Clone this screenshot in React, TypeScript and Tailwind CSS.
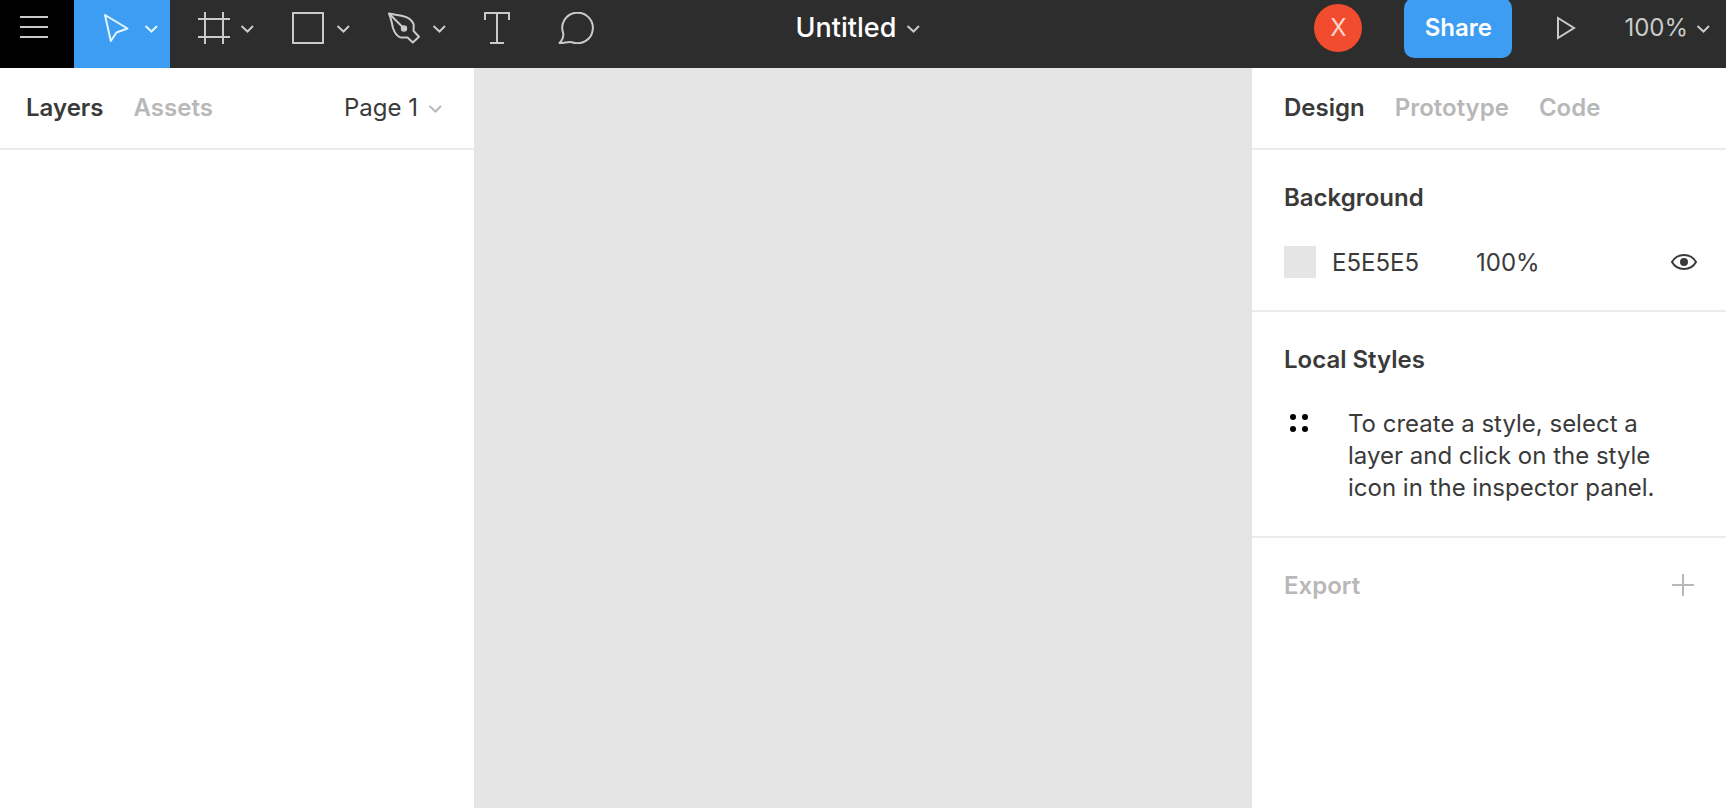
import type { ReactNode } from "react";
import clsx from "clsx";

function Chevron({ className }: { className?: string }) {
  return (
    <svg
      viewBox="0 0 14 10"
      className={clsx("mt-1 h-2.5 w-3.5 shrink-0", className)}
      fill="none"
      stroke="currentColor"
      strokeWidth="2"
    >
      <path d="M1.500 1 7.500 6.500 13 1" />
    </svg>
  );
}

const MoveIcon = () => (
  <svg viewBox="0 0 32 32" className="h-8 w-8" fill="none" stroke="currentColor" strokeWidth="2" strokeLinejoin="round">
    <path d="M3 3 25.5 16.5 14.5 20.5 8.8 29Z" />
  </svg>
);

const FrameIcon = () => (
  <svg viewBox="0 0 32 32" className="h-8 w-8" fill="none" stroke="currentColor" strokeWidth="2">
    <path d="M7 0V32M25 0V32M0 7H32M0 25H32" />
  </svg>
);

const RectangleIcon = () => (
  <svg viewBox="2 0 32 32" className="h-8 w-8 overflow-visible" fill="none" stroke="currentColor" strokeWidth="2">
    <rect x="1" y="1" width="30" height="30" />
  </svg>
);

const PenIcon = () => (
  <svg
    viewBox="0 0 32 32"
    className="h-8 w-8 overflow-visible"
    fill="none"
    stroke="currentColor"
    strokeWidth="2"
    strokeLinejoin="round"
  >
    <path d="M-1 1.5C4 2.5 9 3.2 13.5 4.2C19 5.5 21.5 7.5 23.5 12C24.3 14.5 23.2 17 23.6 19L29 24.7L22.8 30.5L17.5 25.6C15 25.3 12.5 26 10 25.2C6 23.5 4.5 20.5 3 16C1.8 11 1 6 -1 1.5Z" />
    <path d="M-1 1.5 14 16.5" />
    <circle cx="14" cy="16.5" r="2.2" fill="currentColor" />
  </svg>
);

const TextIcon = () => (
  <svg viewBox="0 0 32 32" className="h-8 w-8" fill="none" stroke="currentColor" strokeWidth="2">
    <path d="M3 8V1H27V8M15 1V31M8 31H22" />
  </svg>
);

const CommentIcon = () => (
  <svg viewBox="0 0 40 32" className="h-8 w-10" fill="none" stroke="currentColor" strokeWidth="2" strokeLinejoin="round">
    <path d="M1.5 31C4.5 28 5.6 25 5.3 21.5A15.3 15.3 0 1 1 14 30.2C10.5 29.4 6.5 31 1.5 31Z" />
  </svg>
);

const tools = [
  { title: "Move", icon: MoveIcon, menu: true, active: true },
  { title: "Frame", icon: FrameIcon, menu: true },
  { title: "Rectangle", icon: RectangleIcon, menu: true },
  { title: "Pen", icon: PenIcon, menu: true },
  { title: "Text", icon: TextIcon },
  { title: "Comment", icon: CommentIcon },
];

function Toolbar() {
  return (
    <header className="grid h-[68px] shrink-0 grid-cols-[1fr_auto_1fr] bg-[#2c2d2c] text-[#c9cac9]">
      <div className="flex">
        <button aria-label="Main menu" className="flex w-[74px] items-center bg-black pb-3 pl-5">
          <svg viewBox="0 0 28 24" className="h-6 w-7" stroke="currentColor" strokeWidth="2">
            <path d="M0 1H28M0 11H28M0 21H28" />
          </svg>
        </button>
        {tools.map((tool) => (
          <button
            key={tool.title}
            aria-label={tool.title}
            className={clsx(
              "flex items-center pb-3",
              tool.menu ? "w-24 gap-2.5 pl-7" : "w-20 justify-center",
              tool.active && "bg-[#3d9df2] text-[#e4f5fd]"
            )}
          >
            <tool.icon />
            {tool.menu && <Chevron />}
          </button>
        ))}
      </div>

      <button className="flex items-center gap-2.5 pr-2.5 pb-3 text-[27px] font-medium text-white">
        Untitled
        <Chevron className="text-[#c9cac9]" />
      </button>

      <div className="flex items-center justify-end pr-4 pb-3">
        <div className="flex h-12 w-12 items-center justify-center rounded-full bg-[#f24c2f] text-[#fbd5cb]">X</div>
        <button className="-my-0.5 ml-10.5 h-15 w-[108px] rounded-[10px] bg-[#3d9df2] font-semibold text-white">
          Share
        </button>
        <button aria-label="Present" className="ml-11">
          <svg viewBox="0 0 20 24" className="h-6 w-5" fill="none" stroke="currentColor" strokeWidth="2">
            <path d="M2 2 18 12 2 22Z" />
          </svg>
        </button>
        <button className="ml-12 flex items-center gap-2">
          100%
          <Chevron />
        </button>
      </div>
    </header>
  );
}

function Tab({ active, children }: { active?: boolean; children: ReactNode }) {
  return <button className={clsx("font-semibold", active ? "text-[#3a3a3a]" : "text-[#b8b8b8]")}>{children}</button>;
}

function LayersPanel() {
  return (
    <aside className="w-[474px] shrink-0 bg-white">
      <div className="flex h-[82px] items-center border-b-2 border-[#ececec] pr-8 pl-[26px]">
        <div className="flex gap-[30px]">
          <Tab active>Layers</Tab>
          <Tab>Assets</Tab>
        </div>
        <button className="ml-auto flex items-center gap-2.5">
          Page 1
          <Chevron className="text-[#b8b8b8]" />
        </button>
      </div>
    </aside>
  );
}

function DesignPanel() {
  return (
    <aside className="w-[474px] shrink-0 bg-white">
      <div className="flex h-[82px] items-center gap-[30px] border-b-2 border-[#ececec] px-8">
        <Tab active>Design</Tab>
        <Tab>Prototype</Tab>
        <Tab>Code</Tab>
      </div>

      <section className="border-b-2 border-[#ececec] py-8 pr-6 pl-8">
        <h2 className="font-semibold">Background</h2>
        <div className="mt-8 flex items-center gap-4">
          <button aria-label="Background colour" className="h-8 w-8 bg-[#e5e5e5]" />
          <input aria-label="Hex" defaultValue="E5E5E5" className="h-8 w-32 pt-0.5 outline-none" />
          <input aria-label="Opacity" defaultValue="100%" className="h-8 w-24 pt-0.5 outline-none" />
          <button aria-label="Toggle visibility" className="ml-auto">
            <svg viewBox="0 0 36 32" className="h-8 w-9" fill="none" stroke="currentColor" strokeWidth="2">
              <path d="M6 16C8.5 11.5 13 9 18 9S27.500 11.5 30 16C27.500 20.500 23 23 18 23S8.500 20.500 6 16Z" />
              <circle cx="18" cy="16" r="4" fill="currentColor" stroke="none" />
            </svg>
          </button>
        </div>
      </section>

      <section className="border-b-2 border-[#ececec] p-8">
        <h2 className="font-semibold">Local Styles</h2>
        <div className="mt-8 flex gap-8">
          <svg viewBox="0 0 32 32" className="h-8 w-8 shrink-0" fill="#000">
            <circle cx="9" cy="9" r="3" />
            <circle cx="21" cy="9" r="3" />
            <circle cx="9" cy="21" r="3" />
            <circle cx="21" cy="21" r="3" />
          </svg>
          <p>To create a style, select a layer and click on the style icon in the inspector panel.</p>
        </div>
      </section>

      <section className="flex items-center justify-between py-8 pr-6 pl-8 text-[#b8b8b8]">
        <h2 className="font-semibold">Export</h2>
        <button aria-label="Add export">
          <svg viewBox="0 0 36 32" className="h-8 w-9" stroke="currentColor" strokeWidth="2">
            <path d="M6 15H28M17 4V26" />
          </svg>
        </button>
      </section>
    </aside>
  );
}

export default function App() {
  return (
    <div className="flex min-h-screen flex-col font-['Inter',sans-serif] text-[24px] leading-8 text-[#3a3a3a]">
      <Toolbar />
      <div className="flex flex-1">
        <LayersPanel />
        <main className="flex-1 bg-[#e5e5e5]" />
        <DesignPanel />
      </div>
    </div>
  );
}
